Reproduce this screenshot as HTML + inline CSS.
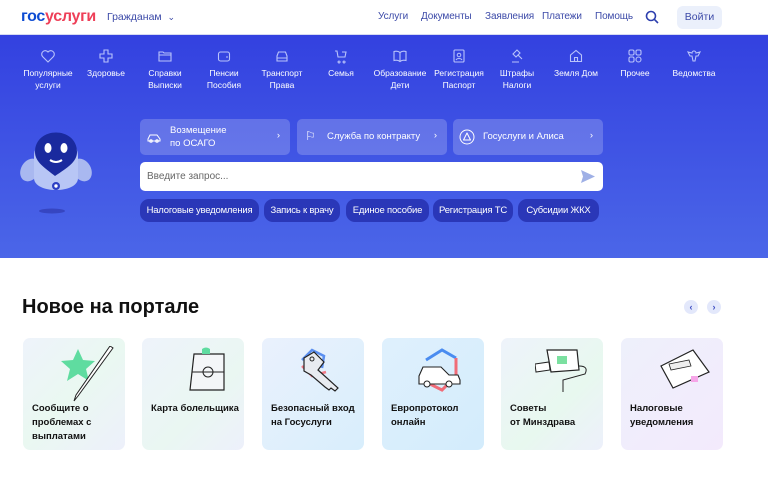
<!DOCTYPE html>
<html><head><meta charset="utf-8"><style>
*{box-sizing:border-box;margin:0;padding:0}
body{width:768px;height:482px;overflow:hidden;background:#fff;font-family:"Liberation Sans","Noto Sans CJK SC",sans-serif;position:relative}
.a{position:absolute}
.hdr{left:0;top:0;width:768px;height:35px;background:#fff;border-bottom:1px solid #d5daf2}
.logo{left:21px;top:8px;font-size:16px;font-weight:bold;letter-spacing:-0.3px}
.nav a{position:absolute;top:11px;font-size:10px;color:#3c4aa8;text-decoration:none;letter-spacing:-0.1px}
.hero{left:0;top:35px;width:768px;height:223px;background:linear-gradient(#3341e0,#4b66e8)}
.it{position:absolute;top:48px;width:70px;margin-left:-35px;text-align:center;color:#fff;font-size:8.5px;line-height:12px}
.it svg{display:block;margin:0 auto 3px;width:16px;height:16px}
.qc{position:absolute;top:119px;height:36px;background:rgba(255,255,255,0.2);border-radius:5px;color:#fff;font-size:9.5px}
.chip{position:absolute;top:199px;height:23px;background:#2a37b8;border-radius:9px;color:#fff;font-size:9.5px;line-height:23px;text-align:center;letter-spacing:-0.2px}
.card{position:absolute;top:338px;width:102px;height:112px;border-radius:7px;background:linear-gradient(135deg,#eef6ff,#eaf0fb)}
.card p{position:absolute;left:9px;top:64px;font-size:9.5px;line-height:14px;color:#111;font-weight:bold}
.arr{position:absolute;top:300px;width:14px;height:14px;border-radius:7px;background:#e3e8fb;color:#3a4ac0;font-size:9px;text-align:center;line-height:14px;font-weight:bold}
</style></head><body>
<div class="a hdr"></div>
<div class="a logo"><span style="color:#0d4cd3">гос</span><span style="color:#ee3f58">услуги</span></div>
<div class="a" style="left:107px;top:11px;font-size:10.5px;color:#3c4aa8">Гражданам &nbsp;<span style="font-size:9px">⌄</span></div>
<div class="nav">
<a style="left:378px">Услуги</a><a style="left:421px">Документы</a><a style="left:485px">Заявления</a><a style="left:542px">Платежи</a><a style="left:595px">Помощь</a></div>
<svg class="a" style="left:645px;top:10px" width="14" height="14" viewBox="0 0 14 14"><circle cx="6" cy="6" r="4.5" fill="none" stroke="#2d3fae" stroke-width="1.6"/><path d="M9.3 9.3L13 13" stroke="#2d3fae" stroke-width="1.6"/></svg>
<div class="a" style="left:677px;top:6px;width:45px;height:23px;border-radius:6px;background:#ebf0fb;color:#3c4aa8;font-size:10.5px;text-align:center;line-height:23px">Войти</div>
<div class="a hero"></div>
<div>
<div class="it" style="left:48px"><svg viewBox="0 0 16 16"><path d="M8 14L2.5 8.5A3.2 3.2 0 0 1 8 4a3.2 3.2 0 0 1 5.5 4.5Z" fill="none" stroke="#b9c3fb" stroke-width="1.1"/></svg>Популярные<br>услуги</div>
<div class="it" style="left:106px"><svg viewBox="0 0 16 16"><path d="M6 2h4v4h4v4h-4v4H6v-4H2V6h4Z" fill="none" stroke="#b9c3fb" stroke-width="1.1"/></svg>Здоровье</div>
<div class="it" style="left:165px"><svg viewBox="0 0 16 16"><path d="M2 4h4l1 1h7v8H2Z M2 7h12" fill="none" stroke="#b9c3fb" stroke-width="1.1"/></svg>Справки<br>Выписки</div>
<div class="it" style="left:224px"><svg viewBox="0 0 16 16"><rect x="2.5" y="4" width="11" height="9" rx="2" fill="none" stroke="#b9c3fb" stroke-width="1.1"/><path d="M11 8v2" stroke="#b9c3fb"/></svg>Пенсии<br>Пособия</div>
<div class="it" style="left:282px"><svg viewBox="0 0 16 16"><path d="M3 8l1.5-4h7L13 8v5H3Z M3 10h10" fill="none" stroke="#b9c3fb" stroke-width="1.1"/></svg>Транспорт<br>Права</div>
<div class="it" style="left:341px"><svg viewBox="0 0 16 16"><path d="M2 3h2l1 6h7l1-5h-4 M6 13a1 1 0 1 0 0.1 0M11 13a1 1 0 1 0 0.1 0" fill="none" stroke="#b9c3fb" stroke-width="1.1"/></svg>Семья</div>
<div class="it" style="left:400px"><svg viewBox="0 0 16 16"><path d="M8 4.5C6 3 4 3 2 3.5v9c2-.5 4-.5 6 1 2-1.5 4-1.5 6-1v-9C12 3 10 3 8 4.5Zv9" fill="none" stroke="#b9c3fb" stroke-width="1.1"/></svg>Образование<br>Дети</div>
<div class="it" style="left:459px"><svg viewBox="0 0 16 16"><rect x="3" y="2" width="10" height="12" rx="1" fill="none" stroke="#b9c3fb" stroke-width="1.1"/><circle cx="8" cy="7" r="1.8" fill="none" stroke="#b9c3fb"/><path d="M5 12c1-2 5-2 6 0" fill="none" stroke="#b9c3fb"/></svg>Регистрация<br>Паспорт</div>
<div class="it" style="left:517px"><svg viewBox="0 0 16 16"><path d="M4 6l4-4 3 3-4 4Z M9 7l4 4 M3 14h7" fill="none" stroke="#b9c3fb" stroke-width="1.1"/></svg>Штрафы<br>Налоги</div>
<div class="it" style="left:576px"><svg viewBox="0 0 16 16"><path d="M2.5 7L8 2.5 13.5 7v6.5h-11Z M6.5 13.5v-4h3v4" fill="none" stroke="#b9c3fb" stroke-width="1.1"/></svg>Земля Дом</div>
<div class="it" style="left:635px"><svg viewBox="0 0 16 16"><g fill="none" stroke="#b9c3fb" stroke-width="1.1"><rect x="2" y="2" width="5" height="5" rx="1.5"/><rect x="9" y="2" width="5" height="5" rx="1.5"/><rect x="2" y="9" width="5" height="5" rx="1.5"/><circle cx="11.5" cy="11.5" r="2.5"/></g></svg>Прочее</div>
<div class="it" style="left:694px"><svg viewBox="0 0 16 16"><path d="M8 3a2 2 0 0 1 2 2l4-1-2 4h-2l-1 5H7L6 8H4L2 4l4 1a2 2 0 0 1 2-2Z" fill="none" stroke="#b9c3fb" stroke-width="1.1"/></svg>Ведомства</div>
</div>
<svg class="a" style="left:18px;top:122px" width="80" height="96" viewBox="0 0 80 96">
<ellipse cx="34" cy="89" rx="13" ry="2.5" fill="#2b36a8" opacity=".6"/>
<ellipse cx="12" cy="48" rx="9" ry="12" fill="#a9b8f0" transform="rotate(30 12 48)"/>
<ellipse cx="64" cy="48" rx="9" ry="12" fill="#a9b8f0" transform="rotate(-30 64 48)"/>
<path d="M16 34C16 10 60 10 60 34v22c0 16-44 16-44 0Z" fill="#b8c6f5"/>
<path d="M17 30C17 4 59 4 59 30c0 10-10 16-22 24-10-8-20-14-20-24Z" fill="#1a2a9e"/>
<ellipse cx="30" cy="26" rx="3.5" ry="5" fill="#fff"/><ellipse cx="46" cy="26" rx="3.5" ry="5" fill="#fff"/>
<path d="M32 38q6 4 12 0" stroke="#fff" stroke-width="2" fill="none"/>
<circle cx="38" cy="64" r="4" fill="#2b3ec4"/><circle cx="38" cy="64" r="1.7" fill="#fff"/>
</svg>
<div class="qc" style="left:140px;width:150px"><svg class="a" style="left:6px;top:12px" width="16" height="12" viewBox="0 0 16 12"><path d="M2 8l2-4h7l3 4v2H2Z" fill="none" stroke="#fff"/><circle cx="5" cy="10" r="1.3" fill="none" stroke="#fff"/><circle cx="11" cy="10" r="1.3" fill="none" stroke="#fff"/></svg><div class="a" style="left:30px;top:5px;line-height:13px">Возмещение<br>по ОСАГО</div><div class="a" style="right:10px;top:11px">›</div></div>
<div class="qc" style="left:297px;width:150px"><div class="a" style="left:8px;top:10px;font-size:12px">⚐</div><div class="a" style="left:30px;top:12px">Служба по контракту</div><div class="a" style="right:10px;top:11px">›</div></div>
<div class="qc" style="left:453px;width:150px"><svg class="a" style="left:6px;top:10px" width="16" height="16" viewBox="0 0 16 16"><circle cx="8" cy="8" r="7" fill="none" stroke="#fff"/><path d="M4.5 11l3.5-7 3.5 7Z" fill="none" stroke="#fff" stroke-linejoin="round"/></svg><div class="a" style="left:30px;top:12px">Госуслуги и Алиса</div><div class="a" style="right:10px;top:11px">›</div></div>
<div class="a" style="left:140px;top:162px;width:463px;height:29px;background:#fff;border-radius:5px"><div class="a" style="left:7px;top:9px;font-size:10px;color:#666">Введите запрос...</div><svg class="a" style="left:441px;top:8px" width="14" height="13" viewBox="0 0 14 13"><path d="M0 0L14 6.5 0 13 2 6.5Z" fill="#9fb0e6"/></svg></div>
<div class="chip" style="left:140px;width:119px">Налоговые уведомления</div>
<div class="chip" style="left:264px;width:76px">Запись к врачу</div>
<div class="chip" style="left:346px;width:83px">Единое пособие</div>
<div class="chip" style="left:433px;width:80px">Регистрация ТС</div>
<div class="chip" style="left:518px;width:81px">Субсидии ЖКХ</div>
<div class="a" style="left:22px;top:296px;font-size:20px;font-weight:bold;color:#111">Новое на портале</div>
<div class="arr" style="left:684px">‹</div><div class="arr" style="left:707px">›</div>
<div class="card" style="left:23px;background:linear-gradient(135deg,#eef3fb,#eaf8f1 50%,#edf0fb)"><svg class="a" style="left:35px;top:8px" width="60" height="56" viewBox="0 0 60 56"><path d="M20 3l5 11 12 1-9 8 3 12-11-7-11 7 3-12-9-8 12-1Z" fill="#5fdca0"/><path d="M55 2L20 50l-4 5 2-6L52 0Z" fill="#fff" stroke="#222" stroke-width="1"/></svg><p>Сообщите о<br>проблемах с<br>выплатами</p></div>
<div class="card" style="left:142px;background:linear-gradient(135deg,#eef3fb,#eaf7f2 60%,#edf0fb)"><svg class="a" style="left:44px;top:8px" width="46" height="50" viewBox="0 0 46 50"><path d="M8 8h30v36H4Z" fill="#f4f6f8" stroke="#222" stroke-width="1.2"/><path d="M16 3q4-3 8 0v5h-8Z" fill="#5fdca0"/><path d="M6 26h32" stroke="#222"/><circle cx="22" cy="26" r="5" fill="none" stroke="#222"/></svg><p>Карта болельщика</p></div>
<div class="card" style="left:262px;background:linear-gradient(135deg,#eaf1fd,#d8eefc)"><svg class="a" style="left:34px;top:8px" width="56" height="54" viewBox="0 0 56 54"><path d="M6 14L16 4l12 6-2 12" fill="none" stroke="#5b8ff0" stroke-width="2.5"/><path d="M6 20l10 10 14-4" fill="none" stroke="#f07a86" stroke-width="2.5"/><path d="M8 12l10-6 10 10-6 8 20 18-3 3-4-3-2 2-4-3-14-12-7-4Z" fill="#e8ebf0" stroke="#222" stroke-width="1.2"/><circle cx="16" cy="13" r="2" fill="none" stroke="#222"/></svg><p>Безопасный вход<br>на Госуслуги</p></div>
<div class="card" style="left:382px;background:linear-gradient(135deg,#dff0fd,#d3ecfc)"><svg class="a" style="left:34px;top:8px" width="50" height="50" viewBox="0 0 50 50"><path d="M10 14L26 4l14 8" fill="none" stroke="#4a8cf0" stroke-width="3"/><path d="M40 12v18L26 44 10 36" fill="none" stroke="#f06c78" stroke-width="3"/><path d="M3 30l4-9h18l8 8h9l2 5v4H3Z" fill="#fff" stroke="#222" stroke-width="1.1"/><circle cx="11" cy="38" r="3" fill="#fff" stroke="#222"/><circle cx="33" cy="38" r="3" fill="#fff" stroke="#222"/></svg><p>Европротокол<br>онлайн</p></div>
<div class="card" style="left:501px;background:linear-gradient(135deg,#eef3fb,#e8f8ef 60%,#edf0fb)"><svg class="a" style="left:34px;top:8px" width="60" height="50" viewBox="0 0 60 50"><path d="M0 18l14-2 1 8-14 2Z" fill="#fff" stroke="#222"/><path d="M12 4l30 0 2 20-28 2Z" fill="#fff" stroke="#222" stroke-width="1.2"/><path d="M22 10h10v8H22Z" fill="#7be0a0"/><path d="M44 20q10 0 6 8L28 34v12" fill="none" stroke="#222"/></svg><p>Советы<br>от Минздрава</p></div>
<div class="card" style="left:621px;background:linear-gradient(135deg,#eef0fb,#f3eafc)"><svg class="a" style="left:38px;top:10px" width="54" height="50" viewBox="0 0 54 50"><path d="M2 18L34 2l16 22-36 16Z" fill="#fff" stroke="#222" stroke-width="1.2"/><path d="M10 16l20-4 2 6-20 4Z" fill="#eee" stroke="#222" stroke-width=".8"/><rect x="32" y="28" width="7" height="6" fill="#f6a6e8"/></svg><p>Налоговые<br>уведомления</p></div>
</body></html>
